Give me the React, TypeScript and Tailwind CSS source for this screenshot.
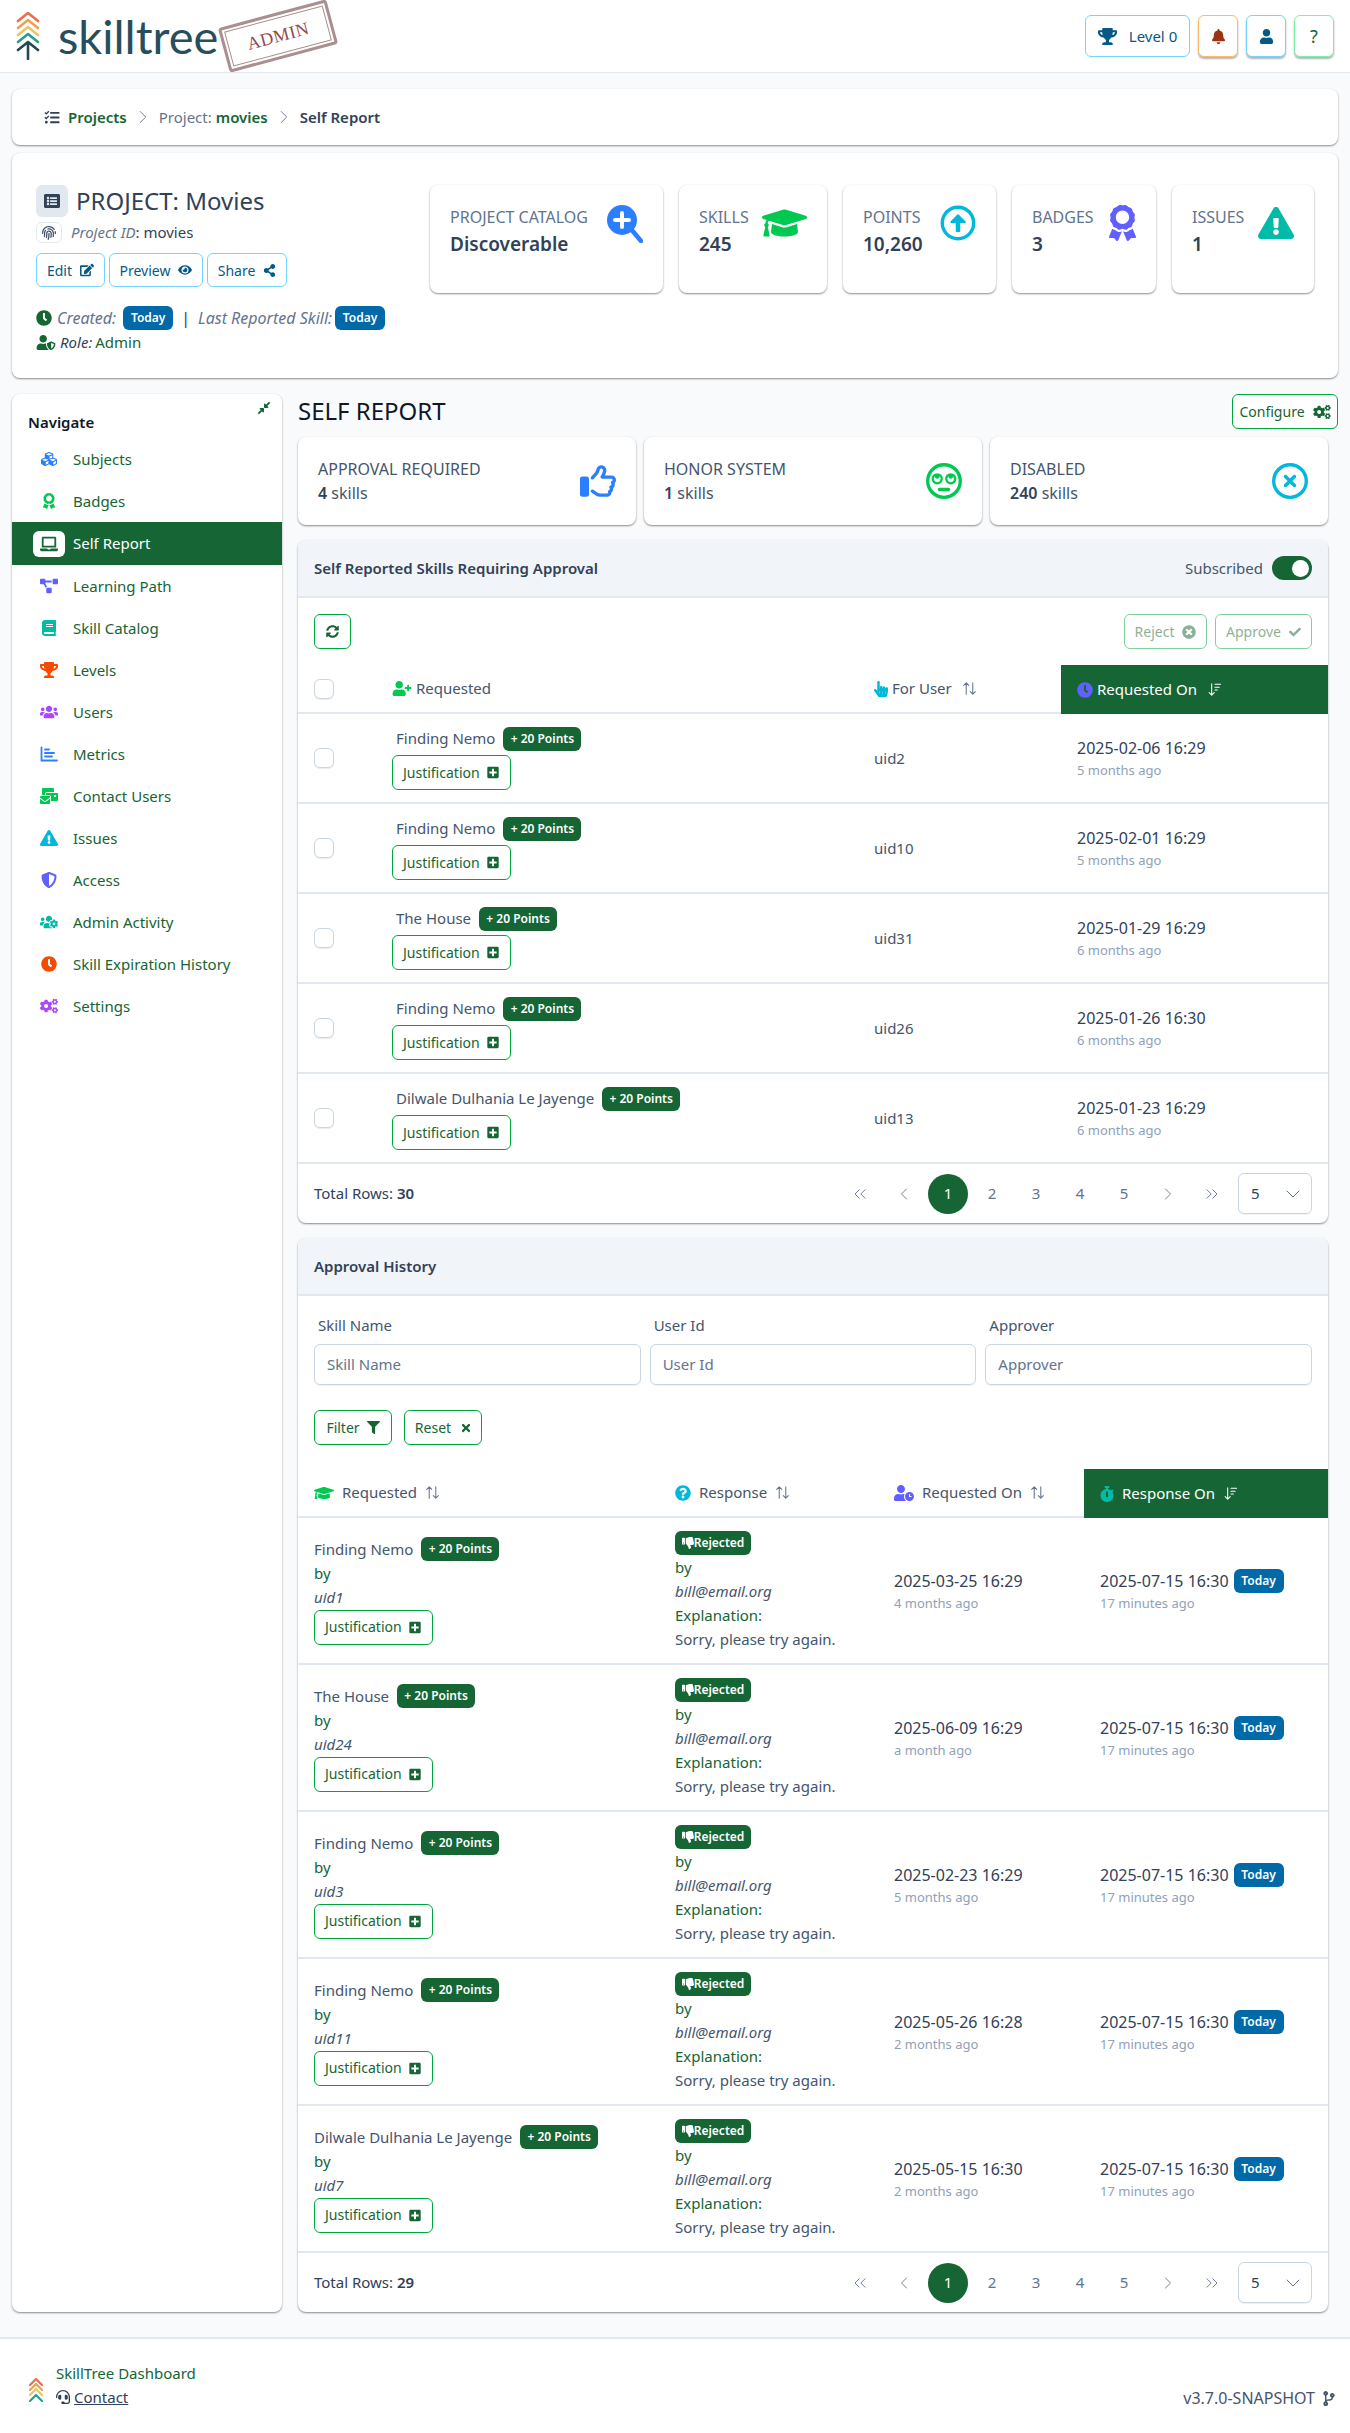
import type { ReactNode } from "react";
import {
  FaTasks, FaListAlt, FaFingerprint, FaEdit, FaEye, FaShareAlt, FaClock, FaUserShield,
  FaGraduationCap, FaRegArrowAltCircleUp, FaAward, FaExclamationTriangle, FaCubes, FaLaptop, FaProjectDiagram,
  FaBook, FaTrophy, FaUsers, FaMailBulk, FaShieldAlt, FaUsersCog, FaCogs, FaCompressAlt,
  FaSyncAlt, FaUserPlus, FaHandPointer, FaPlusSquare,
  FaTimesCircle, FaCheck, FaFilter, FaTimes, FaQuestionCircle, FaUserClock, FaStopwatch, FaThumbsDown,
  FaHeadset, FaCodeBranch, FaBell, FaUser,
} from "react-icons/fa";
import { FaRegThumbsUp, FaRegFaceRollingEyes, FaRegCircleXmark } from "react-icons/fa6";
import { ChevronRight, ChevronLeft, ChevronsLeft, ChevronsRight, ChevronDown } from "lucide-react";

function MetricsIcon({ className }: { className?: string }) {
  return (
    <svg viewBox="0 0 18 16" className={className} fill="none" stroke="currentColor" strokeWidth="1.8" strokeLinecap="round">
      <path d="M1.5 1.5 L1.5 14.5 L17 14.5" />
      <path d="M5 3.5 L9 3.5 M5 7 L14 7 M5 10.5 L12 10.5" />
    </svg>
  );
}

const navItems = [
  { label: "Subjects", icon: FaCubes, color: "text-blue-500" },
  { label: "Badges", icon: FaAward, color: "text-green-500" },
  { label: "Self Report", icon: FaLaptop, color: "text-[#166534]", active: true },
  { label: "Learning Path", icon: FaProjectDiagram, color: "text-indigo-500" },
  { label: "Skill Catalog", icon: FaBook, color: "text-teal-500" },
  { label: "Levels", icon: FaTrophy, color: "text-orange-600" },
  { label: "Users", icon: FaUsers, color: "text-purple-500" },
  { label: "Metrics", icon: MetricsIcon, color: "text-blue-500" },
  { label: "Contact Users", icon: FaMailBulk, color: "text-green-500" },
  { label: "Issues", icon: FaExclamationTriangle, color: "text-cyan-500" },
  { label: "Access", icon: FaShieldAlt, color: "text-indigo-500" },
  { label: "Admin Activity", icon: FaUsersCog, color: "text-teal-500" },
  { label: "Skill Expiration History", icon: FaClock, color: "text-orange-600" },
  { label: "Settings", icon: FaCogs, color: "text-purple-500" },
];

const pendingRows = [
  { skill: "Finding Nemo", user: "uid2", date: "2025-02-06 16:29", ago: "5 months ago" },
  { skill: "Finding Nemo", user: "uid10", date: "2025-02-01 16:29", ago: "5 months ago" },
  { skill: "The House", user: "uid31", date: "2025-01-29 16:29", ago: "6 months ago" },
  { skill: "Finding Nemo", user: "uid26", date: "2025-01-26 16:30", ago: "6 months ago" },
  { skill: "Dilwale Dulhania Le Jayenge", user: "uid13", date: "2025-01-23 16:29", ago: "6 months ago" },
];

const historyRows = [
  { skill: "Finding Nemo", user: "uid1", date: "2025-03-25 16:29", ago: "4 months ago" },
  { skill: "The House", user: "uid24", date: "2025-06-09 16:29", ago: "a month ago" },
  { skill: "Finding Nemo", user: "uid3", date: "2025-02-23 16:29", ago: "5 months ago" },
  { skill: "Finding Nemo", user: "uid11", date: "2025-05-26 16:28", ago: "2 months ago" },
  { skill: "Dilwale Dulhania Le Jayenge", user: "uid7", date: "2025-05-15 16:30", ago: "2 months ago" },
];

const cardClass = "rounded-lg bg-white shadow-[0_1px_2px_rgba(0,0,0,0.45)]";
const outlineGreen = "flex items-center rounded-md border border-green-600 bg-white text-[#166534] text-[14px]";

function SkillTreeLogo({ className }: { className: string }) {
  return (
    <svg viewBox="0 0 24 48" className={className} fill="none" strokeWidth="2.6" strokeLinecap="round" strokeLinejoin="round">
      <path d="M2 9 L12 1 L22 9" stroke="#e8704a" />
      <path d="M2 16 L12 8 L22 16" stroke="#f0a04b" />
      <path d="M2 23 L12 15 L22 23" stroke="#e9c46a" />
      <path d="M2 30 L12 22 L22 30" stroke="#2a9d8f" />
      <path d="M2 38 L12 30 L22 38 M12 30 L12 47" stroke="#264653" />
    </svg>
  );
}

function FooterLogo() {
  return (
    <svg viewBox="0 0 16 24" className="mb-[7px] h-[24px] w-[16px]" fill="none" strokeWidth="2.2" strokeLinecap="round" strokeLinejoin="round">
      <path d="M2 7 L8 1 L14 7" stroke="#e8704a" />
      <path d="M2 12 L8 6 L14 12" stroke="#f0a04b" />
      <path d="M2 17 L8 11 L14 17" stroke="#e9c46a" />
      <path d="M2 23 L8 17 L14 23" stroke="#2a9d8f" />
    </svg>
  );
}

function SearchPlusIcon() {
  return (
    <svg viewBox="0 0 36 38" className="h-[38px] w-[36px]">
      <circle cx="15" cy="15" r="15" fill="#2b7fff" />
      <path d="M24 24 L34 36" stroke="#2b7fff" strokeWidth="4.5" strokeLinecap="round" />
      <path d="M15 8 L15 22 M8 15 L22 15" stroke="#fff" strokeWidth="4" strokeLinecap="round" />
    </svg>
  );
}

function SortIcon() {
  return (
    <svg viewBox="0 0 16 16" className="h-[15px] w-[15px] text-slate-500" fill="none" stroke="currentColor" strokeWidth="1.1" strokeLinecap="round" strokeLinejoin="round">
      <path d="M4.5 14 L4.5 2 M1.8 4.7 L4.5 2 L7.2 4.7" />
      <path d="M11.5 2 L11.5 14 M8.8 11.3 L11.5 14 L14.2 11.3" />
    </svg>
  );
}

function SortDownIcon() {
  return (
    <svg viewBox="0 0 16 16" className="h-[15px] w-[15px] text-white" fill="none" stroke="currentColor" strokeWidth="1.1" strokeLinecap="round" strokeLinejoin="round">
      <path d="M5 2 L5 14 M2.3 11.3 L5 14 L7.7 11.3" />
      <path d="M8.5 2.5 L14.5 2.5 M8.5 5.5 L13 5.5 M8.5 8.5 L11 8.5" />
    </svg>
  );
}

function HeaderBar() {
  return (
    <header className="flex h-[73px] items-center justify-between border-b border-slate-200 bg-white pr-4 pl-4">
      <div className="flex items-center">
        <SkillTreeLogo className="h-[48px] w-6" />
        <span className="ml-[18px] font-['Lato',sans-serif] text-[47px] leading-none font-normal text-[#264e5c]">skilltree</span>
        <div className="relative -mt-[1px] ml-[4px] flex h-[46px] w-[112px] -rotate-[15deg] items-center justify-center rounded-[3px] border-[3px] border-[#a98f8f] bg-white p-[2px]">
          <div className="flex h-full w-full items-center justify-center border border-[#a98f8f]">
            <span className="font-['Liberation_Serif',serif] text-[18px] tracking-[0.5px] text-[#8f4a4f]">ADMIN</span>
          </div>
        </div>
      </div>
      <div className="flex items-center gap-2">
        <button className="flex h-[42px] w-[105px] items-center justify-center gap-[12px] rounded-md border border-sky-300 bg-white text-[15px] text-[#075985]">
          <FaTrophy className="h-[17px] w-[19px]" /> Level 0
        </button>
        <button className="flex h-[42px] w-[40px] items-center justify-center rounded-md border border-orange-300 bg-white text-[#9a3412] shadow-[0_2px_2px_rgba(0,0,0,0.3)]">
          <FaBell className="h-[15px] w-[15px]" />
        </button>
        <button className="flex h-[42px] w-[40px] items-center justify-center rounded-md border border-sky-300 bg-white text-[#075985] shadow-[0_2px_2px_rgba(0,0,0,0.3)]">
          <FaUser className="h-[15px] w-[15px]" />
        </button>
        <button className="flex h-[42px] w-[40px] items-center justify-center rounded-md border border-green-300 bg-white text-[18px] text-[#166534] shadow-[0_2px_2px_rgba(0,0,0,0.3)]">
          ?
        </button>
      </div>
    </header>
  );
}

function Breadcrumb() {
  return (
    <nav className={`${cardClass} mx-3 mt-4 flex h-14 items-center pl-8 text-[15px]`}>
      <FaTasks className="h-[15px] w-[16px] text-slate-700" />
      <span className="ml-2 font-semibold text-[#166534]">Projects</span>
      <ChevronRight className="mx-[5px] h-[22px] w-[22px] text-slate-500" strokeWidth={1} />
      <span className="text-slate-500">Project:</span>
      <span className="ml-1 font-semibold text-[#166534]">movies</span>
      <ChevronRight className="mx-[5px] h-[22px] w-[22px] text-slate-500" strokeWidth={1} />
      <span className="font-semibold text-slate-700">Self Report</span>
    </nav>
  );
}

function StatCard({ label, value, icon, width }: { label: string; value: string; icon: ReactNode; width: string }) {
  return (
    <div className={`${cardClass} flex h-[108px] justify-between pt-[20px] pr-[20px] pl-[20px] ${width}`}>
      <div>
        <div className="text-[16px] leading-[24px] text-slate-500">{label}</div>
        <div className="mt-[1px] text-[19px] leading-[28px] font-semibold text-slate-700">{value}</div>
      </div>
      {icon}
    </div>
  );
}

function ProjectCard() {
  const btn = "flex h-[34px] items-center justify-center gap-[8px] rounded-md border border-sky-300 bg-white text-[14px] text-[#075985]";
  const today = "flex h-[24px] w-[50px] items-center justify-center rounded-md bg-sky-700 text-[12px] font-semibold text-white";
  return (
    <section className={`${cardClass} mx-3 mt-2 flex h-[225px] justify-between pt-8 pr-6 pl-6`}>
      <div>
        <div className="flex items-center">
          <span className="flex h-8 w-8 items-center justify-center rounded-md bg-slate-200">
            <FaListAlt className="h-[16px] w-[18px] text-slate-700" />
          </span>
          <h2 className="ml-2 text-[24px] leading-8 font-normal text-slate-700">PROJECT: Movies</h2>
        </div>
        <div className="mt-[5px] flex h-[21px] items-center text-[15px] text-slate-700">
          <span className="flex h-[21px] w-[26px] items-center justify-center rounded-md border border-slate-200">
            <FaFingerprint className="h-[16px] w-[14px] text-slate-600" />
          </span>
          <i className="ml-[9px] text-slate-500">Project ID</i>: movies
        </div>
        <div className="mt-[10px] flex gap-1">
          <button className={`${btn} w-[69px]`}>Edit <FaEdit className="h-[14px] w-[14px]" /></button>
          <button className={`${btn} w-[94px]`}>Preview <FaEye className="h-[14px] w-[14px]" /></button>
          <button className={`${btn} w-[80px]`}>Share <FaShareAlt className="h-[13px] w-[13px]" /></button>
        </div>
        <div className="mt-[19px] flex h-[24px] items-center text-[16px] text-slate-500">
          <FaClock className="h-[16px] w-[16px] text-[#166534]" />
          <i className="ml-[5px]">Created:</i>
          <span className={`ml-[7px] ${today}`}>Today</span>
          <span className="mx-[8px] text-slate-700">|</span>
          <i>Last Reported Skill:</i>
          <span className={`ml-[3px] ${today}`}>Today</span>
        </div>
        <div className="flex h-[24px] items-center text-[15px]">
          <FaUserShield className="h-[15px] w-[20px] text-[#166534]" />
          <i className="ml-[4px] text-slate-700">Role:</i>
          <span className="ml-[3px] text-[#166534]">Admin</span>
        </div>
      </div>
      <div className="flex gap-4">
        <StatCard label="PROJECT CATALOG" value="Discoverable" width="w-[233px]" icon={<SearchPlusIcon />} />
        <StatCard label="SKILLS" value="245" width="w-[148px]" icon={<FaGraduationCap className="h-9 w-[45px] text-green-500" />} />
        <StatCard label="POINTS" value="10,260" width="w-[153px]" icon={<FaRegArrowAltCircleUp className="h-9 w-9 text-cyan-500" />} />
        <StatCard label="BADGES" value="3" width="w-[144px]" icon={<FaAward className="h-9 w-[27px] text-indigo-500" />} />
        <StatCard label="ISSUES" value="1" width="w-[142px]" icon={<FaExclamationTriangle className="h-9 w-9 text-teal-500" />} />
      </div>
    </section>
  );
}

function Sidebar() {
  return (
    <aside className={`${cardClass} relative h-[1918px] w-[270px] shrink-0 pt-[17px]`}>
      <FaCompressAlt className="absolute top-[7px] right-[11px] h-[14px] w-[14px] text-[#166534]" />
      <div className="pl-4 text-[15px] leading-[22px] font-semibold text-slate-900">Navigate</div>
      <ul className="mt-[5px] text-[15px] text-[#166534]">
        {navItems.map((item) => (
          <li key={item.label} className={`flex items-center ${item.active ? "h-[43px] bg-[#166534] text-white" : "h-[42px]"}`}>
            <span className={`ml-[21px] flex h-[26px] w-[32px] items-center justify-center rounded-md ${item.active ? "bg-white" : ""}`}>
              <item.icon className={`h-[16px] w-[18px] ${item.color}`} />
            </span>
            <span className="ml-[8px]">{item.label}</span>
          </li>
        ))}
      </ul>
    </aside>
  );
}

function SummaryCard({ label, count, icon }: { label: string; count: string; icon: ReactNode }) {
  return (
    <div className={`${cardClass} flex h-[88px] flex-1 items-center justify-between pr-[20px] pl-[20px]`}>
      <div className="text-[16px] leading-[24px] text-slate-600">
        <div>{label}</div>
        <div><span className="font-semibold text-slate-700">{count}</span> skills</div>
      </div>
      {icon}
    </div>
  );
}

function Points({ className = "" }: { className?: string }) {
  return (
    <span className={`flex h-[24px] w-[78px] items-center justify-center rounded-md bg-[#166534] text-[12px] font-semibold text-white ${className}`}>+ 20 Points</span>
  );
}

function Justification() {
  return (
    <button className={`${outlineGreen} h-[35px] w-[119px] justify-between pr-[11px] pl-[10px]`}>
      Justification <FaPlusSquare className="h-[13px] w-[12px]" />
    </button>
  );
}

function Pagination({ total }: { total: string }) {
  const pageCell = "flex h-10 w-[44px] items-center justify-center text-slate-500";
  return (
    <div className="flex h-[59px] items-center justify-between pr-4 pl-4 text-[15px] text-slate-700">
      <div>Total Rows: <span className="font-semibold">{total}</span></div>
      <div className="flex items-center">
        <span className={`${pageCell} text-slate-400`}><ChevronsLeft className="h-5 w-5" strokeWidth={1.1} /></span>
        <span className={`${pageCell} text-slate-400`}><ChevronLeft className="h-5 w-5" strokeWidth={1.1} /></span>
        <span className="mx-[2px] flex h-10 w-10 items-center justify-center rounded-full bg-[#166534] text-white">1</span>
        <span className={pageCell}>2</span>
        <span className={pageCell}>3</span>
        <span className={pageCell}>4</span>
        <span className={pageCell}>5</span>
        <span className={pageCell}><ChevronRight className="h-5 w-5" strokeWidth={1.1} /></span>
        <span className={pageCell}><ChevronsRight className="h-5 w-5" strokeWidth={1.1} /></span>
        <div className="ml-[4px] flex h-[41px] w-[74px] items-center justify-between rounded-md border border-slate-300 pr-[6px] pl-[12px] shadow-[0_1px_1px_rgba(0,0,0,0.06)]">
          5 <ChevronDown className="h-6 w-6 text-slate-500" strokeWidth={1} />
        </div>
      </div>
    </div>
  );
}

function PendingTable() {
  const cols = "grid grid-cols-[78px_482px_203px_1fr]";
  const checkbox = "block h-5 w-5 rounded-md border border-slate-300 bg-white shadow-[0_1px_1px_rgba(0,0,0,0.08)]";
  return (
    <div className="text-[15px] text-slate-600">
      <div className={`${cols} h-[49px] border-b-2 border-slate-200`}>
        <div className="flex items-center pl-4"><span className={checkbox} /></div>
        <div className="flex items-center pl-4">
          <FaUserPlus className="h-[15px] w-[20px] text-green-500" />
          <span className="ml-1">Requested</span>
        </div>
        <div className="flex items-center pl-4">
          <FaHandPointer className="h-[16px] w-[14px] text-cyan-500" />
          <span className="ml-1">For User</span>
          <span className="ml-[10px]"><SortIcon /></span>
        </div>
        <div className="-mb-[2px] flex items-center bg-[#166534] pl-4 text-white">
          <FaClock className="h-4 w-4 text-indigo-500" />
          <span className="ml-1">Requested On</span>
          <span className="ml-[10px]"><SortDownIcon /></span>
        </div>
      </div>
      {pendingRows.map((row) => (
        <div key={row.user} className={`${cols} h-[90px] border-b-2 border-slate-200`}>
          <div className="flex items-center pl-4"><span className={checkbox} /></div>
          <div className="flex flex-col justify-center pl-4">
            <div className="flex items-center">
              <span className="ml-1">{row.skill}</span>
              <Points className="ml-2" />
            </div>
            <div className="mt-1"><Justification /></div>
          </div>
          <div className="flex items-center pl-4">{row.user}</div>
          <div className="flex flex-col justify-center pl-4">
            <div className="text-[16px] leading-[24px] text-slate-700">{row.date}</div>
            <div className="text-[13px] leading-[20px] text-slate-400">{row.ago}</div>
          </div>
        </div>
      ))}
    </div>
  );
}

function HistoryFilters() {
  const fields = ["Skill Name", "User Id", "Approver"];
  return (
    <div className="px-4 pt-[17px] text-[15px]">
      <div className="grid grid-cols-3 gap-[9px]">
        {fields.map((field) => (
          <label key={field} className="block">
            <span className="ml-1 block leading-[24px] text-slate-600">{field}</span>
            <span className="mt-[7px] flex h-[41px] items-center rounded-md border border-slate-300 pl-3 text-slate-500 shadow-[0_1px_1px_rgba(0,0,0,0.06)]">{field}</span>
          </label>
        ))}
      </div>
      <div className="mt-[25px] flex gap-3">
        <button className={`${outlineGreen} h-[35px] w-[78px] justify-center gap-[7px]`}>Filter <FaFilter className="h-[13px] w-[13px]" /></button>
        <button className={`${outlineGreen} h-[35px] w-[78px] justify-center gap-[10px]`}>Reset <FaTimes className="h-[12px] w-[10px]" /></button>
      </div>
    </div>
  );
}

function HistoryTable() {
  const cols = "grid grid-cols-[361px_219px_206px_1fr]";
  return (
    <div className="mt-6 text-[15px] text-slate-600">
      <div className={`${cols} h-[49px] border-b-2 border-slate-200`}>
        <div className="flex items-center pl-4">
          <FaGraduationCap className="h-[16px] w-[20px] text-green-500" />
          <span className="ml-2">Requested</span>
          <span className="ml-2"><SortIcon /></span>
        </div>
        <div className="flex items-center pl-4">
          <FaQuestionCircle className="h-4 w-4 text-cyan-500" />
          <span className="ml-2">Response</span>
          <span className="ml-2"><SortIcon /></span>
        </div>
        <div className="flex items-center pl-4">
          <FaUserClock className="h-4 w-5 text-indigo-500" />
          <span className="ml-2">Requested On</span>
          <span className="ml-2"><SortIcon /></span>
        </div>
        <div className="-mb-[2px] flex items-center bg-[#166534] pl-4 text-white">
          <FaStopwatch className="h-4 w-[14px] text-teal-500" />
          <span className="ml-2">Response On</span>
          <span className="ml-2"><SortDownIcon /></span>
        </div>
      </div>
      {historyRows.map((row) => (
        <div key={row.user} className={`${cols} h-[147px] border-b-2 border-slate-200`}>
          <div className="flex flex-col justify-center pl-4 leading-[24px]">
            <div className="flex items-center">
              {row.skill}
              <Points className="ml-2" />
            </div>
            <div className="text-[#166534]">by</div>
            <i>{row.user}</i>
            <div className="mt-[1px]"><Justification /></div>
          </div>
          <div className="flex flex-col items-start justify-center pl-4 leading-[24px]">
            <span className="flex h-[24px] w-[76px] items-center justify-center rounded-md bg-[#166534] text-[12px] font-semibold text-white">
              <FaThumbsDown className="h-[12px] w-[12px]" />Rejected
            </span>
            <div className="text-[#166534]">by</div>
            <i>bill@email.org</i>
            <div className="text-[#166534]">Explanation:</div>
            <div>Sorry, please try again.</div>
          </div>
          <div className="flex flex-col justify-center pl-4">
            <div className="text-[16px] leading-[24px] text-slate-700">{row.date}</div>
            <div className="text-[13px] leading-[20px] text-slate-400">{row.ago}</div>
          </div>
          <div className="flex flex-col justify-center pl-4">
            <div className="flex items-center gap-[5px] text-[16px] leading-[24px] text-slate-700">
              2025-07-15 16:30
              <span className="flex h-[24px] w-[50px] items-center justify-center rounded-md bg-sky-700 text-[12px] font-semibold text-white">Today</span>
            </div>
            <div className="text-[13px] leading-[20px] text-slate-400">17 minutes ago</div>
          </div>
        </div>
      ))}
    </div>
  );
}

function Panel({ title, right, children }: { title: string; right?: ReactNode; children: ReactNode }) {
  return (
    <section className={`${cardClass} overflow-hidden`}>
      <div className="flex h-[58px] items-center justify-between border-b-2 border-slate-200 bg-slate-100 px-4">
        <h3 className="text-[15px] font-semibold text-slate-700">{title}</h3>
        {right}
      </div>
      {children}
    </section>
  );
}

function SelfReport() {
  return (
    <main className="min-w-0 flex-1">
      <div className="flex h-[35px] items-center justify-between">
        <h1 className="pb-[2px] text-[24px] font-normal text-slate-900">SELF REPORT</h1>
        <button className={`${outlineGreen} h-[35px] w-[106px] justify-center gap-2 text-[13px]`}>Configure <FaCogs className="h-[14px] w-[18px]" /></button>
      </div>
      <div className="pr-[10px]">
        <div className="mt-2 flex gap-2">
          <SummaryCard label="APPROVAL REQUIRED" count="4" icon={<FaRegThumbsUp className="h-9 w-9 text-blue-500" />} />
          <SummaryCard label="HONOR SYSTEM" count="1" icon={<FaRegFaceRollingEyes className="h-9 w-9 text-green-500" />} />
          <SummaryCard label="DISABLED" count="240" icon={<FaRegCircleXmark className="h-9 w-9 text-cyan-500" />} />
        </div>
        <div className="mt-[15px]">
          <Panel
            title="Self Reported Skills Requiring Approval"
            right={
              <div className="flex items-center gap-[9px] text-[15px] text-slate-600">
                Subscribed
                <span className="flex h-6 w-10 items-center justify-end rounded-full bg-[#166534] pr-[3px]">
                  <span className="h-[17px] w-[17px] rounded-full bg-white" />
                </span>
              </div>
            }
          >
            <div className="flex h-[67px] items-center justify-between px-4">
              <button className={`${outlineGreen} h-[35px] w-[37px] justify-center`}><FaSyncAlt className="h-[13px] w-[13px]" /></button>
              <div className="flex gap-2 opacity-50">
                <button className={`${outlineGreen} h-[35px] w-[83px] justify-center gap-2`}>Reject <FaTimesCircle className="h-[14px] w-[14px]" /></button>
                <button className={`${outlineGreen} h-[35px] w-[97px] justify-center gap-2`}>Approve <FaCheck className="h-[12px] w-[12px]" /></button>
              </div>
            </div>
            <PendingTable />
            <Pagination total="30" />
          </Panel>
        </div>
        <div className="mt-[15px]">
          <Panel title="Approval History">
            <HistoryFilters />
            <HistoryTable />
            <Pagination total="29" />
          </Panel>
        </div>
      </div>
    </main>
  );
}

function Footer() {
  return (
    <footer className="mt-[25px] flex h-[96px] items-start justify-between border-t-2 border-slate-200 bg-white pt-[22px] pr-[15px] pl-[28px] text-[15px]">
      <div className="flex items-end">
        <FooterLogo />
        <div className="ml-[12px] leading-[24px]">
          <div className="text-[#166534]">SkillTree Dashboard</div>
          <div className="flex items-center text-slate-700">
            <FaHeadset className="h-[14px] w-[14px]" />
            <span className="ml-1 underline">Contact</span>
          </div>
        </div>
      </div>
      <div className="mt-[25px] flex items-center gap-2 text-[16px] text-slate-600">
        v3.7.0-SNAPSHOT <FaCodeBranch className="h-[15px] w-[12px]" />
      </div>
    </footer>
  );
}

export default function App() {
  return (
    <div className="min-h-[2433px] bg-slate-50 font-['Noto_Sans',sans-serif]">
      <HeaderBar />
      <Breadcrumb />
      <ProjectCard />
      <div className="mt-4 flex gap-4 px-3">
        <Sidebar />
        <SelfReport />
      </div>
      <Footer />
    </div>
  );
}
